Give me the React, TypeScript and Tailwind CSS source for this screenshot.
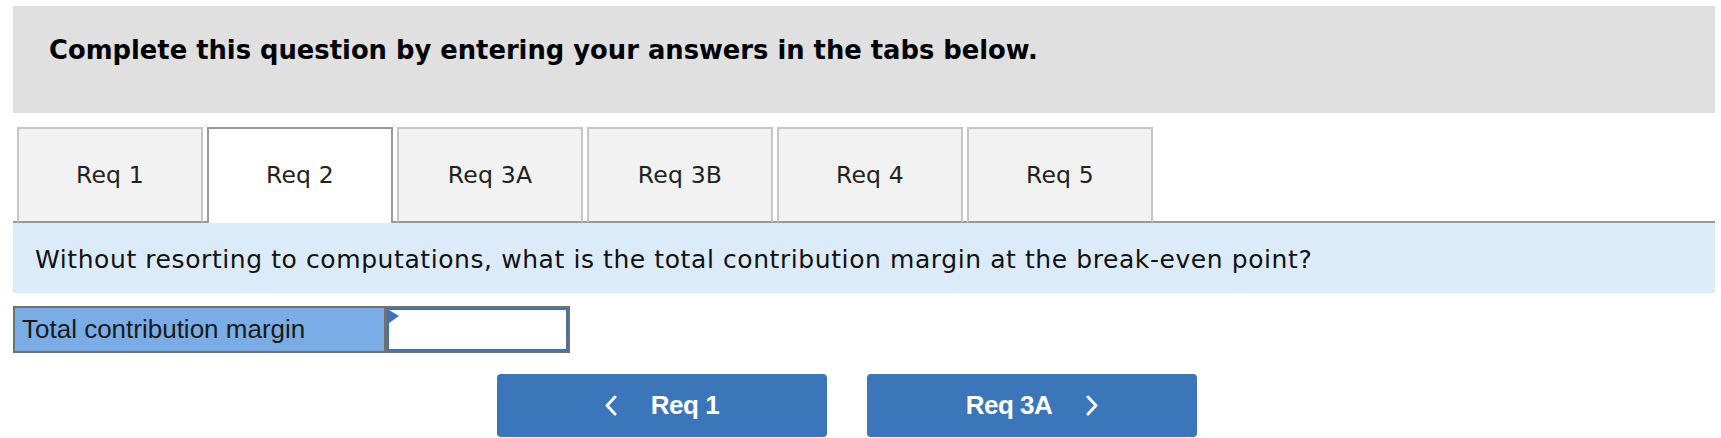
import React, { useState } from 'react';

const tabs = ['Req 1', 'Req 2', 'Req 3A', 'Req 3B', 'Req 4', 'Req 5'];

const Chevron: React.FC<{ dir: 'left' | 'right' }> = ({ dir }) => (
  <svg width="12" height="21" viewBox="0 0 12 21" fill="none" className="shrink-0">
    <polyline
      points={dir === 'left' ? '10,2 2,10.5 10,19' : '2,2 10,10.5 2,19'}
      stroke="white"
      strokeWidth="3"
      strokeLinecap="round"
      strokeLinejoin="round"
    />
  </svg>
);

const App: React.FC = () => {
  const [active, setActive] = useState('Req 2');
  const [value, setValue] = useState('');

  return (
    <div className="w-full h-[438px] bg-white pl-[13px] pr-[6px] pt-[6px] overflow-hidden">
      <div className="h-[107px] bg-[#e0e0e0] pl-[36px] pt-[29px]">
        <h1 className="font-['DejaVu_Sans',sans-serif] font-bold text-[25.8px] leading-[30px] text-black">
          Complete this question by entering your answers in the tabs below.
        </h1>
      </div>

      <div className="mt-[14px] flex gap-[4px] pl-[4px] border-b-2 border-[#999999]">
        {tabs.map((t) => {
          const isActive = t === active;
          return (
            <button
              key={t}
              onClick={() => setActive(t)}
              className={`w-[186px] h-[96px] -mb-[2px] border-2 flex items-center justify-center font-['DejaVu_Sans',sans-serif] text-[23.5px] tracking-[0.2px] text-[#222222] ${
                isActive
                  ? 'bg-white border-[#999999] border-b-0'
                  : 'bg-[#f2f2f2] border-[#c6c6c6] border-b-[#999999] pt-[2px]'
              }`}
            >
              {t}
            </button>
          );
        })}
      </div>

      <div className="h-[70px] bg-[#dbebf9] flex items-center pl-[22px] pt-[3px]">
        <p className="font-['DejaVu_Sans',sans-serif] text-[25px] tracking-[0.58px] text-[#111111]">
          Without resorting to computations, what is the total contribution margin at the break-even point?
        </p>
      </div>

      <div className="mt-[13px] flex w-[557px] h-[47px] border-2 border-[#707070]">
        <div className="w-[372px] bg-[#7aade5] flex items-center pl-[7px] border-r-[3px] border-[#707070]">
          <span className="font-['Liberation_Sans',Arial,sans-serif] text-[26px] text-[#1a1a1a]">
            Total contribution margin
          </span>
        </div>
        <div className="relative flex-1">
          <input
            value={value}
            onChange={(e) => setValue(e.target.value)}
            className="w-full h-full border-2 border-[#3a74b8] bg-white outline-none px-2 font-['Liberation_Sans',Arial,sans-serif] text-[22px]"
          />
          <svg className="absolute left-[2px] top-[2px]" width="11" height="14" viewBox="0 0 11 14">
            <polygon points="0,0 10,6 0,13" fill="#3a74b8" />
          </svg>
        </div>
      </div>

      <div className="mt-[21px] flex gap-[40px] pl-[484px]">
        <button className="w-[330px] h-[63px] rounded-[4px] bg-[#3a76b9] flex items-center justify-center gap-[34px] text-white font-['Liberation_Sans',Arial,sans-serif] font-bold text-[26px] tracking-[-0.5px]">
          <Chevron dir="left" />
          <span>Req 1</span>
        </button>
        <button className="w-[330px] h-[63px] rounded-[4px] bg-[#3a76b9] flex items-center justify-center gap-[34px] text-white font-['Liberation_Sans',Arial,sans-serif] font-bold text-[26px] tracking-[-0.5px]">
          <span>Req 3A</span>
          <Chevron dir="right" />
        </button>
      </div>
    </div>
  );
};

export default App;
